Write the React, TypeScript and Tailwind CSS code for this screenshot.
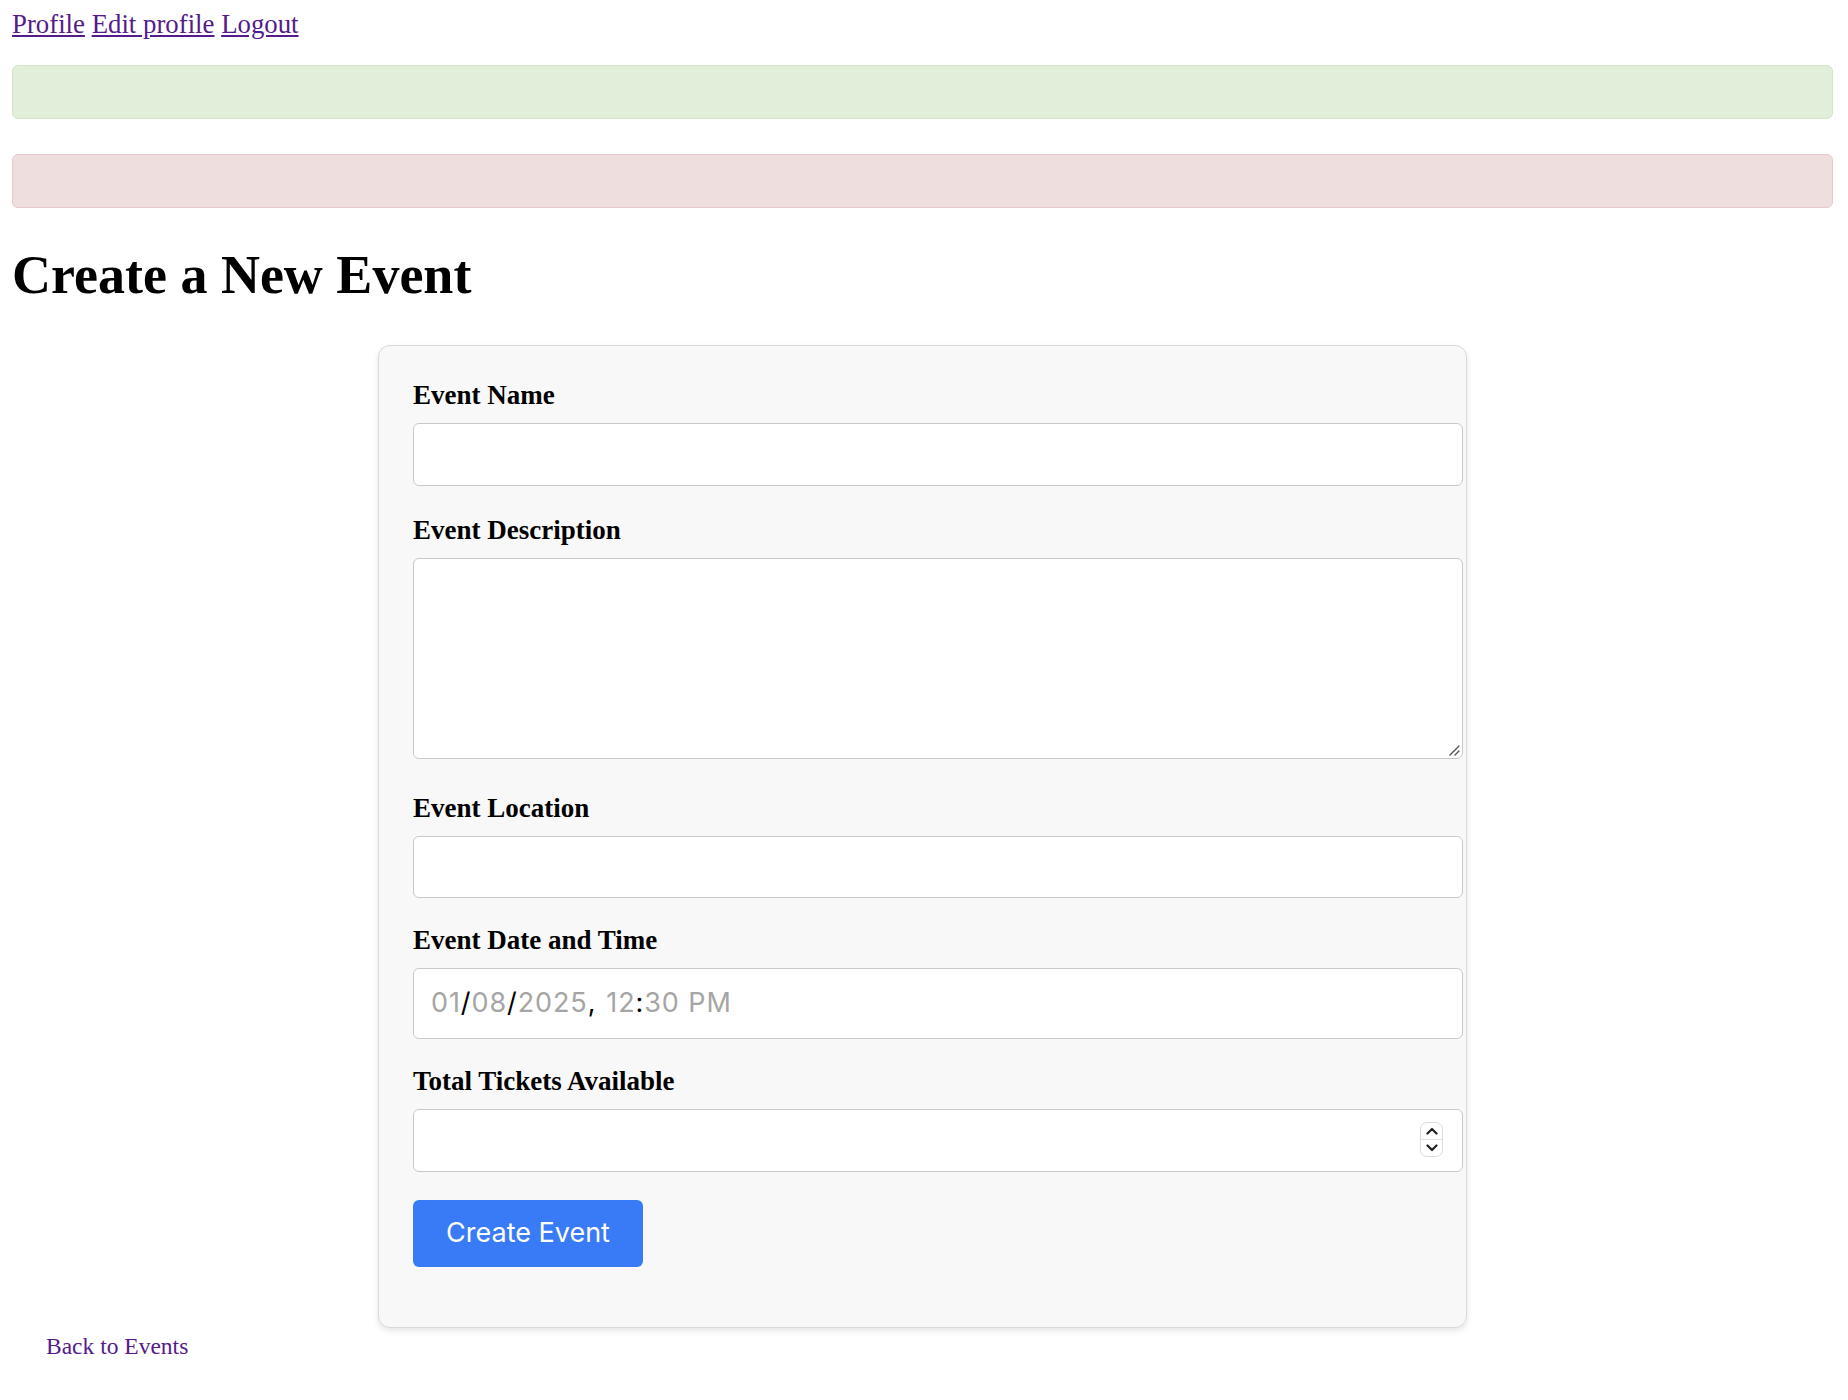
import { useState } from "react";

const fieldBox =
  "block w-[1050px] rounded-[6px] border-[1.5px] border-[#c9c9c9] bg-white px-[17px] font-['Inter',sans-serif] text-[27px] outline-none";

const Label = ({ text, htmlFor }: { text: string; htmlFor: string }) => (
  <label htmlFor={htmlFor} className="mb-[13px] block text-[27px] font-bold leading-[30px]">
    {text}
  </label>
);

const App = () => {
  const [name, setName] = useState("");
  const [description, setDescription] = useState("");
  const [location, setLocation] = useState("");
  const [tickets, setTickets] = useState("");

  /* date parts shown the way the browser draws an empty-ish datetime field */
  const gray = "text-[#a5a5a5]";

  return (
    <div className="min-h-screen bg-white pl-[12px] pr-[15px] pt-[9px] font-['Liberation_Serif',serif] text-black">
      <nav className="text-[26.8px] leading-[30px]">
        <a href="#" className="text-[#551a8b] underline">
          Profile
        </a>{" "}
        <a href="#" className="text-[#551a8b] underline">
          Edit profile
        </a>{" "}
        <a href="#" className="text-[#551a8b] underline">
          Logout
        </a>
      </nav>

      <div className="mt-[26px] h-[54px] rounded-[6px] border-[1.5px] border-[#d4e7c7] bg-[#e1efda]" />
      <div className="mt-[35px] h-[54px] rounded-[6px] border-[1.5px] border-[#e6c9cc] bg-[#efdede]" />

      <h1 className="mt-[37px] text-[54px] font-bold leading-[60px]">Create a New Event</h1>

      <form
        className="mx-auto mt-[40px] w-[1089px] rounded-[12px] border-[1.5px] border-[#dadada] bg-[#f8f8f8] pb-[60px] pl-[34px] pr-[34px] pt-[34px] shadow-[0_3px_6px_rgba(0,0,0,0.1)]"
        onSubmit={(e) => e.preventDefault()}
      >
        <Label text="Event Name" htmlFor="name" />
        <input
          id="name"
          type="text"
          value={name}
          onChange={(e) => setName(e.target.value)}
          className={`${fieldBox} h-[63px]`}
        />

        <div className="mt-[29px]">
          <Label text="Event Description" htmlFor="description" />
          <div className="relative w-[1050px]">
            <textarea
              id="description"
              value={description}
              onChange={(e) => setDescription(e.target.value)}
              className={`${fieldBox} h-[201px] resize-none py-[14px]`}
            />
            <svg
              className="pointer-events-none absolute bottom-[3px] right-[3px]"
              width="12"
              height="12"
              viewBox="0 0 12 12"
              fill="none"
            >
              <path d="M11 2L2 11M11 7L7 11" stroke="#555" strokeWidth="1.4" strokeLinecap="round" />
            </svg>
          </div>
        </div>

        <div className="mt-[34px]">
          <Label text="Event Location" htmlFor="location" />
          <input
            id="location"
            type="text"
            value={location}
            onChange={(e) => setLocation(e.target.value)}
            className={`${fieldBox} h-[62px]`}
          />
        </div>

        <div className="mt-[27px]">
          <Label text="Event Date and Time" htmlFor="date" />
          <div id="date" className={`${fieldBox} flex h-[71px] items-center tracking-[0.9px]`}>
            <span className={gray}>01</span>
            <span>/</span>
            <span className={gray}>08</span>
            <span>/</span>
            <span className={gray}>2025</span>
            <span>,</span>
            <span className={`${gray} ml-[10px]`}>12</span>
            <span>:</span>
            <span className={gray}>30 PM</span>
          </div>
        </div>

        <div className="mt-[27px]">
          <Label text="Total Tickets Available" htmlFor="tickets" />
          <div className="relative w-[1050px]">
            <input
              id="tickets"
              type="text"
              inputMode="numeric"
              value={tickets}
              onChange={(e) => setTickets(e.target.value)}
              className={`${fieldBox} h-[63px]`}
            />
            <div className="absolute right-[20px] top-[13px] flex h-[35px] w-[23px] flex-col rounded-[7px] border border-[#dcdcdc] bg-white">
              <div className="flex flex-1 items-center justify-center border-b border-[#e2e2e2]">
                <svg width="12" height="8" viewBox="0 0 12 8" fill="none">
                  <path d="M1.5 6.5L6 2L10.5 6.5" stroke="#222" strokeWidth="2.2" strokeLinecap="round" strokeLinejoin="round" />
                </svg>
              </div>
              <div className="flex flex-1 items-center justify-center">
                <svg width="12" height="8" viewBox="0 0 12 8" fill="none">
                  <path d="M1.5 1.5L6 6L10.5 1.5" stroke="#222" strokeWidth="2.2" strokeLinecap="round" strokeLinejoin="round" />
                </svg>
              </div>
            </div>
          </div>
        </div>

        <button
          type="submit"
          className="mt-[28px] h-[67px] w-[230px] rounded-[6px] bg-[#397bf6] font-['Inter',sans-serif] text-[27px] text-white"
        >
          Create Event
        </button>
      </form>

      <a href="#" className="mt-[4px] block pl-[34px] text-[23.5px] leading-[28px] text-[#551a8b]">
        Back to Events
      </a>
    </div>
  );
};

export default App;
